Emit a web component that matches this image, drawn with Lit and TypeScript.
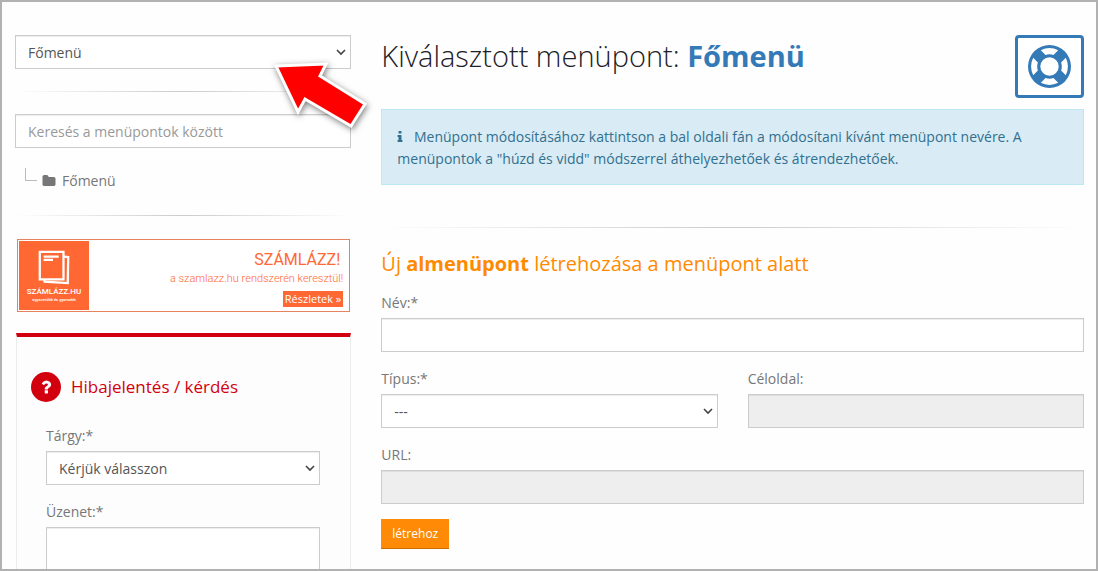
import { LitElement, html, css } from "lit";
import { customElement } from "lit/decorators.js";

@customElement("app-root")
export class AppRoot extends LitElement {
  static styles = css`
    :host {
      display: block;
      font-family: "Open Sans", "Noto Sans", sans-serif;
      font-size: 14px;
      line-height: 22px;
      color: #777;
    }
    *, *::before, *::after { box-sizing: border-box; }
    .page {
      position: relative;
      display: flex;
      gap: 30px;
      height: 100vh;
      overflow: hidden;
      padding: 33px 12px 0 13px;
      border: 2px solid #b1b1b1;
      background: #fefefe;
    }
    .side { flex: 0 0 calc((100% + 30px) / 3 - 30px); }
    .main { flex: 1; min-width: 0; }
    .control {
      display: block;
      width: 100%;
      height: 34px;
      margin: 0;
      padding: 6px 12px;
      border: 1px solid #ccc;
      border-radius: 0;
      background: #fff;
      box-shadow: inset 0 1px 1px rgba(0, 0, 0, 0.075);
      color: #555;
      font: inherit;
      line-height: 20px;
    }
    select.control {
      appearance: none;
      padding: 7px 12px 5px;
      background: #fff url("data:image/svg+xml,%3Csvg xmlns='http://www.w3.org/2000/svg' width='10' height='7' fill='none' stroke='%23444' stroke-width='1.6'%3E%3Cpath d='M1 1l4 4 4-4'/%3E%3C/svg%3E") no-repeat right 4px center;
    }
    .control::placeholder { color: #999; opacity: 1; }
    .control:disabled { background: #eee; opacity: 1; }
    textarea.control { height: 140px; resize: none; }
    .rule {
      height: 1px;
      margin: 22px 0;
      border: 0;
      background: linear-gradient(to right, transparent, rgba(0, 0, 0, 0.2), transparent);
    }
    .tree { display: flex; align-items: center; height: 23px; margin: 22px 0 0; padding: 0 0 2px 10px; list-style: none; }
    .branch { width: 12px; height: 13px; margin: -13px 5px 0 0; border: solid #bbb; border-width: 0 0 1px 1px; }
    .node { display: flex; align-items: center; gap: 6px; color: inherit; text-decoration: none; }
    .banner {
      display: flex;
      height: 73px;
      margin: 23px 1px 21px 2px;
      padding: 1px;
      border: 1px solid #e5835d;
      background: #fff;
      color: #ff6833;
      text-decoration: none;
    }
    .brand {
      display: flex;
      flex-direction: column;
      align-items: center;
      width: 70px;
      padding-top: 9px;
      background: #ff6833;
      color: #fff;
      font: 500 8px/12px "Roboto", sans-serif;
    }
    .tagline { font-size: 4px; line-height: 4px; }
    .pitch {
      flex: 1;
      display: flex;
      flex-direction: column;
      align-items: flex-end;
      padding: 8px 5px 0 0;
      font: 300 11px/17px "Roboto", sans-serif;
    }
    .pitch strong { font-size: 16px; line-height: 21px; font-weight: 400; margin-right: 3px; }
    .more { margin-top: 4px; padding: 0 2px; background: #ff6833; color: #fff; font: 11px/16px "Open Sans", sans-serif; }
    .panel {
      margin-left: 1px;
      padding: 35px 15px 15px 14px;
      border: 1px solid #ececec;
      border-top: 4px solid #d2000f;
      background: #fdfdfd;
    }
    .panel-title { display: flex; align-items: center; gap: 10px; margin: 0 0 22px; color: #d2000f; font-size: 17px; line-height: 30px; font-weight: 400; }
    .badge { display: flex; align-items: center; justify-content: center; width: 30px; height: 30px; border-radius: 50%; background: #d2000f; }
    .panel-form { padding: 0 15px; }
    .field { margin-bottom: 15px; }
    .field label { display: block; margin-bottom: 3px; line-height: 24px; }
    .pair { display: grid; grid-template-columns: 1fr 1fr; gap: 30px; }
    .head { display: flex; align-items: flex-start; justify-content: space-between; margin-bottom: 11px; }
    .title { margin: 0; color: #1d2127; font-size: 29px; line-height: 42px; font-weight: 300; }
    .title strong { color: #337ab7; font-weight: 700; }
    .help {
      display: flex;
      align-items: center;
      justify-content: center;
      width: 69px;
      height: 63px;
      padding: 0;
      border: 3px solid #337ab7;
      border-radius: 4px;
      background: #fff;
    }
    .notice { margin: 0 0 42px; padding: 16px 15px 14px; border: 1px solid #bce8f1; background: #d9ebf5; color: #31708f; }
    .info { margin-right: 7px; vertical-align: -2px; }
    .main .rule { margin: 0 0 22px; }
    .subtitle { margin: 0 0 14px; color: #ff8a00; font-size: 20px; line-height: 27px; font-weight: 400; }
    .subtitle strong { font-weight: 700; }
    .submit {
      height: 30px;
      padding: 1px 11px 0;
      border: 0;
      border-bottom: 1px solid #cc6e00;
      background: #ff8a05;
      color: #fff;
      font: 12px/18px "Open Sans", sans-serif;
    }
    .pointer { position: absolute; left: 262px; top: 50px; pointer-events: none; filter: drop-shadow(1px 2px 3px rgba(0, 0, 0, 0.5)); }
  `;

  render() {
    return html`
      <div class="page">
        <aside class="side">
          <select class="control" aria-label="Menü"><option>Főmenü</option></select>
          <hr class="rule" />
          <input class="control" type="text" placeholder="Keresés a menüpontok között" aria-label="Keresés a menüpontok között" />
          <ul class="tree">
            <li class="branch" role="presentation"></li>
            <li>
              <a class="node" href="#">
                <svg width="14" height="14" viewBox="0 0 1792 1792" fill="#777"><path d="M1728 608v704q0 92-66 158t-158 66h-1216q-92 0-158-66t-66-158v-960q0-92 66-158t158-66h320q92 0 158 66t66 158v32h672q92 0 158 66t66 158z" /></svg>
                Főmenü
              </a>
            </li>
          </ul>
          <hr class="rule" />
          <a class="banner" href="#">
            <span class="brand">
              <svg width="34" height="36" viewBox="0 0 34 38" fill="none" stroke="#fff" stroke-width="2.400">
                <path d="M2 2H27V31H2Z" />
                <path d="M27 7L32 7.500L31.500 35L7 33.500L7 31" />
                <path d="M6 7H22M6 10.500H16" />
              </svg>
              <span>SZÁMLÁZZ.HU</span>
              <span class="tagline">egyszerűbb és gyorsabb</span>
            </span>
            <span class="pitch">
              <strong>SZÁMLÁZZ!</strong>
              <span>a szamlazz.hu rendszerén keresztül!</span>
              <span class="more">Részletek »</span>
            </span>
          </a>
          <section class="panel">
            <h4 class="panel-title">
              <span class="badge">
                <svg width="18" height="18" viewBox="0 0 1792 1792" fill="#fff"><path d="M1088 1256v240q0 16-12 28t-28 12h-240q-16 0-28-12t-12-28v-240q0-16 12-28t28-12h240q16 0 28 12t12 28zm316-600q0 54-15.500 101t-35 76.500-55 59.500-57.500 43.500-61 35.500q-41 23-68.500 65t-27.500 67q0 17-12 32.500t-28 15.500h-240q-15 0-25.500-18.500t-10.500-37.500v-45q0-83 65-156.500t143-108.500q59-27 84-56t25-76q0-42-46.500-74t-107.500-32q-65 0-108 29-35 25-107 115-13 16-31 16-12 0-25-8l-164-125q-13-10-15.500-25t5.500-28q160-266 464-266 80 0 161 31t146 83 106 127.500 41 158.500z" /></svg>
              </span>
              Hibajelentés / kérdés
            </h4>
            <form class="panel-form">
              <div class="field">
                <label for="subject">Tárgy:*</label>
                <select class="control" id="subject"><option>Kérjük válasszon</option></select>
              </div>
              <div class="field">
                <label for="message">Üzenet:*</label>
                <textarea class="control" id="message"></textarea>
              </div>
            </form>
          </section>
        </aside>
        <main class="main">
          <header class="head">
            <h2 class="title">Kiválasztott menüpont: <strong>Főmenü</strong></h2>
            <button class="help" type="button" aria-label="Súgó">
              <svg width="43" height="43" viewBox="0 0 1792 1792" fill="#337ab7"><path d="M896 0q182 0 348 71t286 191 191 286 71 348-71 348-191 286-286 191-348 71-348-71-286-191-191-286-71-348 71-348 191-286 286-191 348-71zm0 128q-190 0-361 90l194 194q82-28 167-28t167 28l194-194q-171-90-361-90zm-678 1129l194-194q-28-82-28-167t28-167l-194-194q-90 171-90 361t90 361zm678 407q190 0 361-90l-194-194q-82 28-167 28t-167-28l-194 194q171 90 361 90zm0-384q159 0 271.500-112.500t112.500-271.500-112.500-271.500-271.500-112.500-271.500 112.500-112.500 271.500 112.500 271.500 271.500 112.500zm484-217l194 194q90-171 90-361t-90-361l-194 194q28 82 28 167t-28 167z" /></svg>
            </button>
          </header>
          <p class="notice">
            <svg class="info" width="6" height="14" viewBox="512 0 768 1792" fill="#31708f"><path d="M1216 1344v128q0 26-19 45t-45 19h-512q-26 0-45-19t-19-45v-128q0-26 19-45t45-19h64v-384h-64q-26 0-45-19t-19-45v-128q0-26 19-45t45-19h384q26 0 45 19t19 45v576h64q26 0 45 19t19 45zm-128-1152v192q0 26-19 45t-45 19h-256q-26 0-45-19t-19-45v-192q0-26 19-45t45-19h256q26 0 45 19t19 45z" /></svg>
            Menüpont módosításához kattintson a bal oldali fán a módosítani kívánt menüpont nevére. A menüpontok a "húzd és vidd" módszerrel áthelyezhetőek és átrendezhetőek.
          </p>
          <hr class="rule" />
          <h4 class="subtitle">Új <strong>almenüpont</strong> létrehozása a menüpont alatt</h4>
          <form>
            <div class="field">
              <label for="name">Név:*</label>
              <input class="control" id="name" type="text" />
            </div>
            <div class="pair">
              <div class="field">
                <label for="type">Típus:*</label>
                <select class="control" id="type"><option>---</option></select>
              </div>
              <div class="field">
                <label for="target">Céloldal:</label>
                <input class="control" id="target" type="text" disabled />
              </div>
            </div>
            <div class="field">
              <label for="url">URL:</label>
              <input class="control" id="url" type="text" disabled />
            </div>
            <button class="submit" type="button">létrehoz</button>
          </form>
        </main>
        <svg class="pointer" width="110" height="86" viewBox="264 52 110 86" aria-hidden="true">
          <path d="M276 66L326 64L320 76L365 104L351 126L305 99L298 112Z" fill="#f00" stroke="#fff" stroke-width="3" />
        </svg>
      </div>
    `;
  }
}
